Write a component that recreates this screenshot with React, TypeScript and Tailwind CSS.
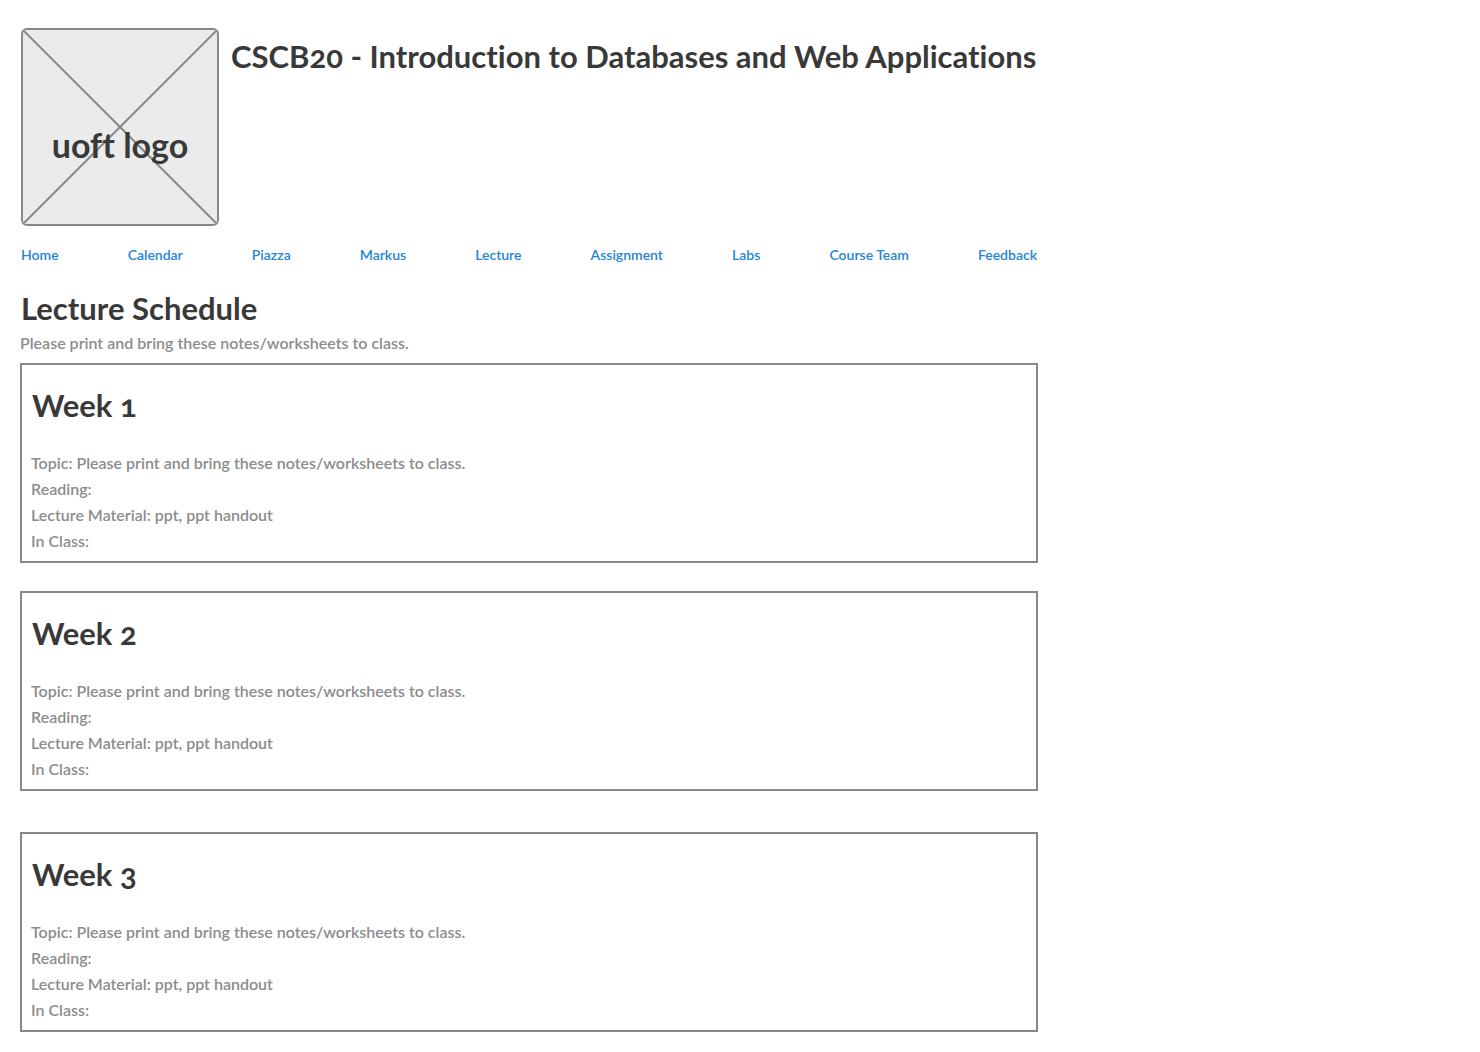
const links = ['Home', 'Calendar', 'Piazza', 'Markus', 'Lecture', 'Assignment', 'Labs', 'Course Team', 'Feedback'];

const weeks = [
  { title: 'Week 1', space: 'mt-2' },
  { title: 'Week 2', space: 'mt-7' },
  { title: 'Week 3', space: 'mt-[41px]' },
];

function Logo() {
  return (
    <div className="grid size-[198px] shrink-0 place-items-center overflow-hidden rounded-md border-2 border-[#888] bg-[#ebebeb]">
      <svg className="col-start-1 row-start-1 size-full" viewBox="0 0 194 194" stroke="#888" strokeWidth="2" aria-hidden="true">
        <path d="M0 0L194 194M194 0L0 194" />
      </svg>
      <span className="col-start-1 row-start-1 pt-9 text-[34px] leading-10 font-bold">uoft logo</span>
    </div>
  );
}

function Week({ title, space }: { title: string; space: string }) {
  return (
    <section className={`border-2 border-[#888] px-[9px] pt-[19px] pb-[7px] ${space}`}>
      <h3 className="px-px text-[31px] leading-[42px] font-bold">{title}</h3>
      <div className="mt-6 text-base leading-[26px] font-semibold text-[#8c8c8c]">
        <p>Topic: Please print and bring these notes/worksheets to class.</p>
        <p>Reading:</p>
        <p>Lecture Material: ppt, ppt handout</p>
        <p>In Class:</p>
      </div>
    </section>
  );
}

export default function App() {
  return (
    <div className="min-h-screen bg-white px-5 pt-7 pb-5 font-['Lato',sans-serif] text-[#393939] [font-variant-ligatures:none] [font-variant-numeric:oldstyle-nums]">
      <div className="max-w-[1018px]">
        <header className="flex items-start gap-3 px-px">
          <Logo />
          <h1 className="pt-2 text-[31px] leading-10 font-bold">CSCB20 - Introduction to Databases and Web Applications</h1>
        </header>
        <nav className="mt-5 flex justify-between px-px text-sm leading-[18px] font-semibold text-[#2484d8]">
          {links.map((label) => (
            <a key={label} href="#">{label}</a>
          ))}
        </nav>
        <main>
          <h2 className="mt-6 px-px text-[31px] leading-10 font-bold">Lecture Schedule</h2>
          <p className="mt-[3px] text-base leading-6 font-semibold text-[#8c8c8c]">Please print and bring these notes/worksheets to class.</p>
          {weeks.map((week) => (
            <Week key={week.title} {...week} />
          ))}
        </main>
      </div>
    </div>
  );
}
